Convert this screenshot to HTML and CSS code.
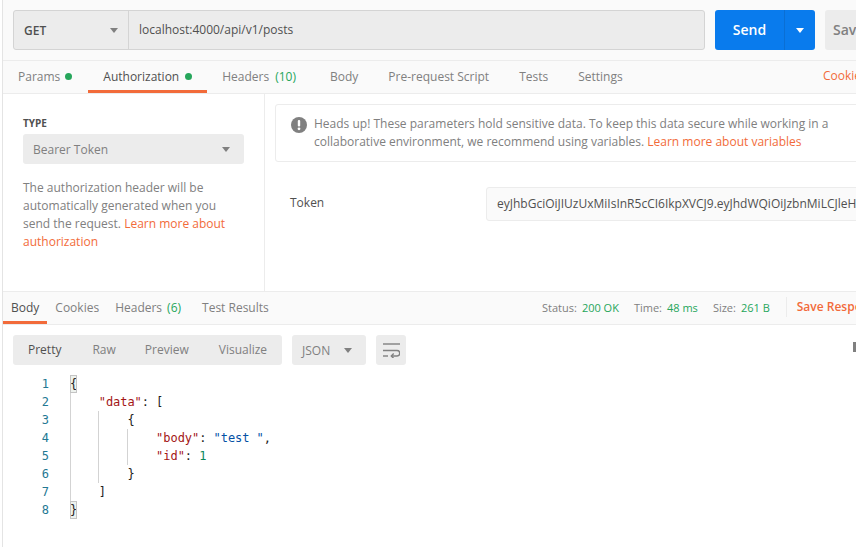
FILE: index.html
```html
<!DOCTYPE html>
<html lang="en">
<head>
    <meta charset="UTF-8">
    <meta name="viewport" content="width=device-width, initial-scale=1.0">
    <title>Postman request</title>
    <link rel="stylesheet" href="styles.css">
</head>
<body>
    <div class="app">
        <!-- request url bar -->
        <div class="url-bar">
            <div class="url-group">
                <div class="method">GET<span class="caret"></span></div>
                <div class="url">localhost:4000/api/v1/posts</div>
            </div>
            <div class="send">
                <span class="send-label">Send</span>
                <span class="send-more"><span class="caret caret-white"></span></span>
            </div>
            <div class="save">Save</div>
        </div>

        <!-- request tabs -->
        <div class="req-tabs">
            <div class="tab tab-params">Params<span class="dot"></span></div>
            <div class="tab tab-auth active">Authorization<span class="dot"></span></div>
            <div class="tab tab-headers">Headers<span class="count">(10)</span></div>
            <div class="tab tab-body">Body</div>
            <div class="tab tab-pre">Pre-request Script</div>
            <div class="tab tab-tests">Tests</div>
            <div class="tab tab-settings">Settings</div>
            <div class="tab-link">Cookies</div>
        </div>

        <!-- authorization panel -->
        <div class="auth">
            <div class="auth-side">
                <div class="type-label">TYPE</div>
                <div class="type-select">Bearer Token<span class="caret"></span></div>
                <p class="type-help">The authorization header will be automatically generated when you send the request. <a>Learn more about authorization</a></p>
            </div>
            <div class="auth-main">
                <div class="notice">
                    <svg class="notice-icon" width="16" height="16" viewBox="0 0 16 16">
                        <circle cx="8" cy="8" r="8" fill="#808080"/>
                        <rect x="6.8" y="3" width="2.4" height="6.6" rx="1" fill="#fff"/>
                        <circle cx="8" cy="11.8" r="1.4" fill="#fff"/>
                    </svg>
                    <p>Heads up! These parameters hold sensitive data. To keep this data secure while working in a collaborative environment, we recommend using variables. <a>Learn more about variables</a></p>
                </div>
                <div class="token-row">
                    <div class="token-label">Token</div>
                    <div class="token-input">eyJhbGciOiJIUzUxMiIsInR5cCI6IkpXVCJ9.eyJhdWQiOiJzbnMiLCJleHAiOjE2</div>
                </div>
            </div>
        </div>

        <!-- response tabs -->
        <div class="res-bar">
            <div class="res-tab active">Body</div>
            <div class="res-tab">Cookies</div>
            <div class="res-tab res-headers">Headers<span class="count">(6)</span></div>
            <div class="res-tab">Test Results</div>
            <div class="res-meta">
                <span class="meta">Status:<b>200 OK</b></span>
                <span class="meta">Time:<b>48 ms</b></span>
                <span class="meta">Size:<b>261 B</b></span>
                <span class="save-res">Save Response</span>
            </div>
        </div>

        <!-- response toolbar -->
        <div class="res-tools">
            <div class="modes">
                <span class="mode active">Pretty</span>
                <span class="mode mode-raw">Raw</span>
                <span class="mode">Preview</span>
                <span class="mode">Visualize</span>
            </div>
            <div class="format">JSON<span class="caret"></span></div>
            <div class="wrap">
                <svg width="17" height="15" viewBox="0 0 17 15" fill="none" stroke="#808080" stroke-width="1.4">
                    <path d="M0 1h17"/>
                    <path d="M0 7.5h14a2.7 2.7 0 0 1 0 5.5H8.5"/>
                    <path d="M10.7 10.6 8.3 13l2.4 2.4"/>
                    <path d="M0 13h5"/>
                </svg>
            </div>
            <div class="edge-mark"></div>
        </div>

        <!-- response body -->
        <div class="code">
            <div class="line"><span class="num">1</span><span class="src"><span class="match">{</span></span></div>
            <div class="line"><span class="num">2</span><span class="src">    <span class="key">"data"</span>: [</span></div>
            <div class="line"><span class="num">3</span><span class="src">        {</span></div>
            <div class="line"><span class="num">4</span><span class="src">            <span class="key">"body"</span>: <span class="str">"test "</span>,</span></div>
            <div class="line"><span class="num">5</span><span class="src">            <span class="key">"id"</span>: <span class="int">1</span></span></div>
            <div class="line"><span class="num">6</span><span class="src">        }</span></div>
            <div class="line"><span class="num">7</span><span class="src">    ]</span></div>
            <div class="line"><span class="num">8</span><span class="src"><span class="match">}</span></span></div>
            <span class="guide guide-1"></span>
            <span class="guide guide-2"></span>
            <span class="guide guide-3"></span>
        </div>
    </div>
</body>
</html>
```

FILE: styles.css
```css
* {
    margin: 0;
    padding: 0;
    box-sizing: border-box;
}

html, body {
    height: 100%;
    overflow: hidden;
}

body {
    background: #fff;
    font-family: 'Open Sans', sans-serif;
    font-size: 12px;
    color: #808080;
}

a {
    color: #f26b3a;
}

.app {
    width: 854px;
    height: 547px;
    margin-left: 2px;
    overflow: hidden;
    border-left: 1px solid #e4e4e4;
}

.caret {
    flex-shrink: 0;
    width: 0;
    height: 0;
    border-left: 4px solid transparent;
    border-right: 4px solid transparent;
    border-top: 5px solid #808080;
}

/* url bar */
.url-bar {
    display: flex;
    height: 61px;
    padding: 10px 0 0 10px;
    background: #fafafa;
    border-bottom: 1px solid #ececec;
}

.url-group {
    display: flex;
    flex-shrink: 0;
    width: 692px;
    height: 40px;
    background: #ececec;
    border: 1px solid #d4d4d4;
    border-radius: 3px;
}

.method {
    display: flex;
    align-items: center;
    justify-content: space-between;
    width: 115px;
    padding: 0 10px;
    border-right: 1px solid #d4d4d4;
    font-weight: 600;
    color: #505050;
}

.url {
    padding-left: 10px;
    line-height: 38px;
    color: #505050;
}

.send {
    display: flex;
    flex-shrink: 0;
    width: 100px;
    height: 40px;
    margin-left: 10px;
    background: #097bed;
    border-radius: 3px;
    color: #fff;
    font-size: 14px;
    font-weight: 600;
}

.send-label {
    width: 69px;
    line-height: 40px;
    text-align: center;
}

.send-more {
    display: flex;
    align-items: center;
    justify-content: center;
    flex: 1;
    border-left: 1px solid #0a6fd4;
}

.caret-white {
    border-top-color: #fff;
}

.save {
    flex-shrink: 0;
    width: 80px;
    height: 40px;
    margin-left: 10px;
    padding-left: 8px;
    background: #ececec;
    border-radius: 3px;
    font-size: 14px;
    font-weight: 600;
    line-height: 40px;
}

/* request tabs */
.req-tabs {
    display: flex;
    height: 33px;
    background: #fafafa;
    border-bottom: 1px solid #ececec;
}

.tab {
    display: flex;
    align-items: center;
    height: 32px;
    padding-bottom: 2px;
    white-space: nowrap;
}

.tab.active {
    color: #505050;
    border-bottom: 3px solid #f26b3a;
    padding-top: 1px;
    padding-bottom: 0;
}

.tab-params { margin-left: 15px; }
.tab-auth { margin-left: 16px; padding-left: 15px; padding-right: 15px; }
.tab-headers { margin-left: 15px; }
.tab-body { margin-left: 34px; }
.tab-pre { margin-left: 30px; }
.tab-tests { margin-left: 30px; }
.tab-settings { margin-left: 30px; }

.dot {
    width: 7px;
    height: 7px;
    margin-left: 5px;
    background: #26a65b;
    border-radius: 50%;
}

.tab-auth .dot {
    margin-left: 6px;
}

.count {
    margin-left: 5px;
    color: #26a65b;
}

.tab-headers .count {
    margin-left: 6px;
}

.tab-link {
    margin-left: auto;
    width: 33px;
    overflow: hidden;
    color: #f26b3a;
    line-height: 30px;
    white-space: nowrap;
}

/* authorization */
.auth {
    display: flex;
    height: 198px;
    border-bottom: 1px solid #ececec;
}

.auth-side {
    flex-shrink: 0;
    width: 262px;
    height: 197px;
    padding: 21px 20px 0;
    border-right: 1px solid #ececec;
}

.type-label {
    height: 16px;
    font-size: 10px;
    font-weight: 700;
    line-height: 16px;
    color: #505050;
}

.type-select {
    display: flex;
    align-items: center;
    justify-content: space-between;
    height: 30px;
    margin-top: 3px;
    padding: 0 14px 0 10px;
    background: #ececec;
    border-radius: 3px;
}

.type-help {
    margin-top: 15px;
    line-height: 18px;
}

.auth-main {
    flex: 1;
    min-width: 0;
    padding: 10px 0 0 10px;
}

.notice {
    display: flex;
    gap: 7px;
    width: 620px;
    height: 58px;
    padding: 10px 15px;
    border: 1px solid #ececec;
    border-radius: 3px;
    line-height: 18px;
}

.notice-icon {
    flex-shrink: 0;
    margin-top: 2px;
}

.notice p {
    width: 530px;
}

.token-row {
    display: flex;
    align-items: center;
    margin-top: 25px;
}

.token-label {
    flex-shrink: 0;
    width: 211px;
    padding: 0 0 4px 15px;
    color: #505050;
}

.token-input {
    flex-shrink: 0;
    width: 420px;
    height: 34px;
    padding-left: 10px;
    overflow: hidden;
    background: #fafafa;
    border: 1px solid #ececec;
    border-radius: 3px;
    color: #505050;
    line-height: 32px;
    white-space: nowrap;
}

/* response tabs */
.res-bar {
    display: flex;
    height: 33px;
    background: #fafafa;
    border-bottom: 1px solid #ececec;
    white-space: nowrap;
}

.res-tab {
    height: 32px;
    margin-right: 16px;
    line-height: 32px;
}

.res-tab:first-child {
    margin-right: 8px;
    padding: 0 8px;
}

.res-headers {
    margin-right: 21px;
}

.res-tab.active {
    color: #505050;
    border-bottom: 3px solid #f26b3a;
}

.res-meta {
    display: flex;
    align-items: center;
    flex-shrink: 0;
    height: 30px;
    margin-left: auto;
    width: 314px;
    overflow: hidden;
    font-size: 11px;
}

.meta {
    margin-right: 15px;
}

.meta:nth-child(3) {
    margin-right: 16px;
}

.meta b {
    margin-left: 5px;
    color: #26a65b;
    font-weight: 400;
}

.save-res {
    height: 20px;
    padding-left: 10px;
    border-left: 1px solid #ececec;
    color: #f26b3a;
    font-size: 12px;
    font-weight: 600;
    line-height: 20px;
}

/* response toolbar */
.res-tools {
    position: relative;
    display: flex;
    gap: 10px;
    height: 50px;
    padding: 10px 0 0 10px;
}

.modes {
    display: flex;
    width: 269px;
    height: 30px;
    background: #ececec;
    border-radius: 3px;
    line-height: 30px;
}

.mode {
    padding: 0 15px;
}

.mode.active {
    margin-right: 1px;
    color: #505050;
}

.mode-raw {
    padding-right: 14px;
}

.format {
    display: flex;
    align-items: center;
    justify-content: space-between;
    width: 74px;
    height: 30px;
    padding: 0 14px 0 10px;
    background: #ececec;
    border-radius: 3px;
}

.wrap {
    display: flex;
    align-items: center;
    justify-content: center;
    width: 30px;
    height: 30px;
    background: #ececec;
    border-radius: 3px;
}

.edge-mark {
    position: absolute;
    top: 17px;
    right: 0;
    width: 3px;
    height: 10px;
    background: #808080;
}

/* code */
.code {
    position: relative;
    font-family: 'DejaVu Sans Mono', monospace;
    font-size: 12px;
    line-height: 18px;
    color: #212121;
}

.line {
    display: flex;
    height: 18px;
}

.num {
    width: 46px;
    text-align: right;
    color: #237893;
}

.src {
    margin-left: 21px;
    letter-spacing: -0.05px;
    white-space: pre;
}

.match {
    display: inline-block;
    height: 18px;
    background: #eef2ee;
    outline: 1px solid #c4c4c4;
    outline-offset: -1px;
}

.key { color: #a31515; }
.str { color: #0451a5; }
.int { color: #09885a; }

.guide {
    position: absolute;
    width: 1px;
    background: #d3d3d3;
}

.guide-1 { left: 67px; top: 18px; height: 108px; }
.guide-2 { left: 95px; top: 36px; height: 72px; }
.guide-3 { left: 124px; top: 54px; height: 36px; }
```
